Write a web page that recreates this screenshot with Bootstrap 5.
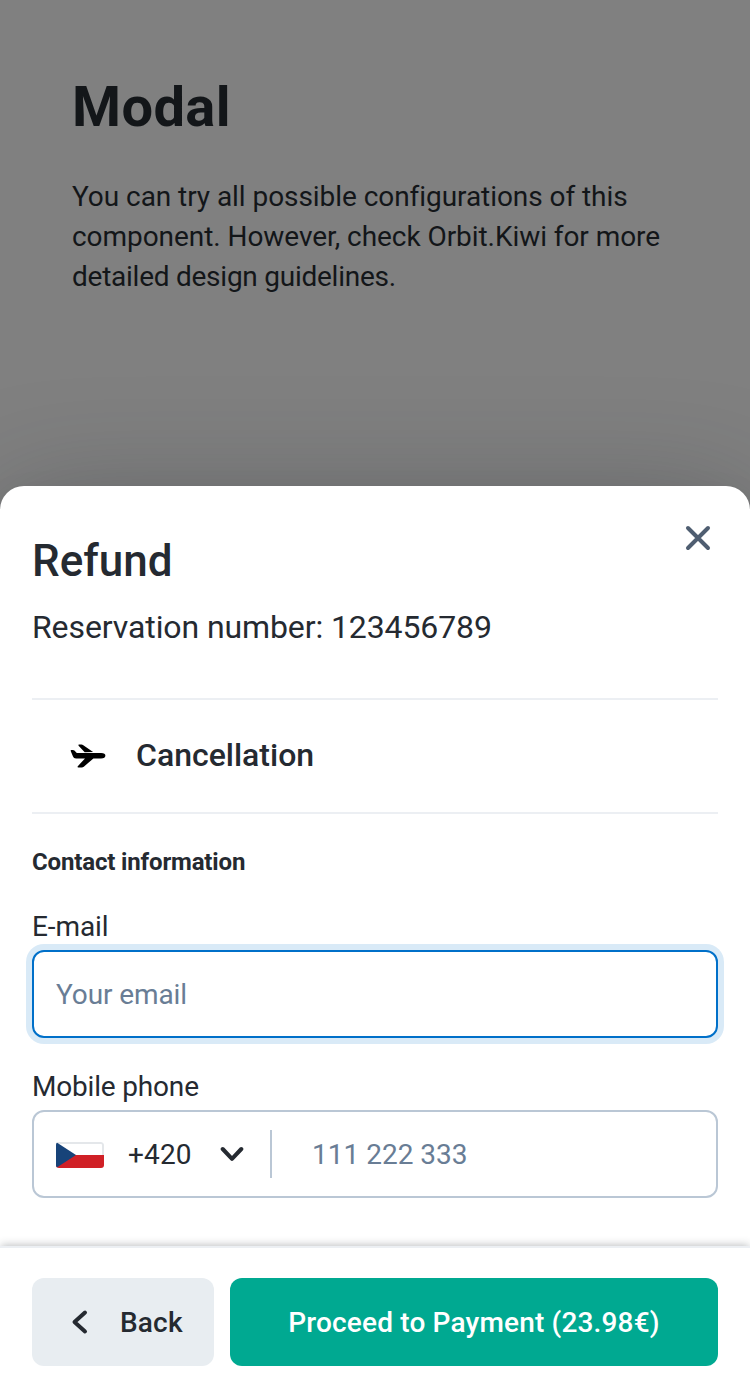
<!DOCTYPE html>
<html lang="en">
<head>
<meta charset="utf-8">
<meta name="viewport" content="width=device-width, initial-scale=1">
<title>Refund</title>
<link href="https://cdn.jsdelivr.net/npm/bootstrap@5.3.0/dist/css/bootstrap.min.css" rel="stylesheet">
<style>
  body { font-family: Roboto, "Liberation Sans", sans-serif; color: #252a31; background: #808080; font-size: 28px; line-height: 40px; }
  .page-intro { height: 486px; padding: 73px 72px 0; color: #131619; }
  .page-intro h1 { font-size: 56px; line-height: 68px; font-weight: 700; margin-bottom: 36px; letter-spacing: .4px; }
  .page-intro p { letter-spacing: -.06px; }
  .page-intro .tight { letter-spacing: -.25px; }
  .sheet { height: 912px; border-radius: 24px 24px 0 0; box-shadow: 0 24px 48px -8px rgba(37,42,49,.24), 0 16px 120px 0 rgba(37,42,49,.32); }
  .sheet-body { padding: 47px 32px 0; }
  .sheet-title { font-size: 44px; line-height: 56px; font-weight: 500; }
  .sheet-sub { font-size: 32px; line-height: 48px; margin: 14px 0 47px; letter-spacing: -.1px; }
  .close-btn { width: 40px; height: 40px; margin-top: -15px; }
  .section-row { height: 116px; border-top: 2px solid #eceff3; border-bottom: 2px solid #eceff3; padding-left: 32px; gap: 24px; font-size: 32px; font-weight: 500; }
  .section-row span { padding-bottom: 2px; }
  .section-title { font-size: 24px; line-height: 32px; font-weight: 700; margin: 32px 0 29px; letter-spacing: -.15px; }
  .field-label { display: block; line-height: 40px; margin-bottom: 3px; letter-spacing: -.1px; }
  .field-label.phone-label { margin-top: 29px; letter-spacing: -.18px; }
  .field-box { height: 88px; border: 2px solid #bac7d5; border-radius: 12px; padding: 0 22px; background: #fff; font-size: 28px; letter-spacing: -.1px; }
  .field-box.active, .field-box.active:focus { border-color: #0070c9; box-shadow: 0 0 0 6px #d9eaf7; }
  .field-box::placeholder, .phone-input::placeholder { color: #697d95; opacity: 1; }
  .phone-input { font-size: 28px; padding: 2px 0 0 40px; width: auto; min-width: 0; flex: 1; letter-spacing: 0; }
  .phone-input:focus { box-shadow: none; }
  .divider { width: 2px; height: 48px; background: #bac7d5; margin-left: 26px; }
  .flag { margin-top: 2px; }
  .prefix { width: 92px; padding-top: 2px; letter-spacing: .15px; }
  .sheet-footer { height: 152px; padding: 30px 32px 0; gap: 16px; border-top: 2px solid #eceff3; box-shadow: 0 -2px 8px -1px rgba(37,42,49,.3); }
  .action { height: 88px; border: 0; border-radius: 12px; font-size: 28px; font-weight: 500; padding: 2px 0 0; letter-spacing: .17px; }
  .action-back { width: 182px; background: #e8edf1; color: #252a31; }
  .action-back svg { margin-top: -2px; }
  .action-pay { background: #00a991; color: #fff; }
</style>
</head>
<body class="overflow-hidden">
<header class="page-intro">
  <h1>Modal</h1>
  <p class="m-0">You can try all possible configurations of this component. However, check Orbit.Kiwi for more <span class="tight">detailed design guidelines.</span></p>
</header>
<main class="sheet bg-white d-flex flex-column position-relative" role="dialog" aria-label="Refund">
  <div class="sheet-body flex-grow-1">
    <div class="d-flex justify-content-between">
      <h2 class="sheet-title m-0">Refund</h2>
      <button class="close-btn btn p-0 border-0 d-flex" aria-label="Close">
        <svg width="40" height="40" viewBox="0 0 40 40" fill="none" stroke="#4f5e71" stroke-width="4" stroke-linecap="round"><path d="M10 10 30 30M30 10 10 30"/></svg>
      </button>
    </div>
    <p class="sheet-sub">Reservation number: 123456789</p>
    <div class="section-row d-flex align-items-center">
      <svg width="48" height="48" viewBox="0 0 48 48" fill="#000"><path d="M7.3 18h1.6q.9 0 1.5.6l2.4 2.3H37.2q4.2.3 4.2 2.6 0 2.9-4.4 2.9h-7.6l-9.6 8.3q-.9.7-2 .7h-3.4q-1.5-.1-.6-1.2l7.2-7.8h-9q-2.4 0-3-2L6.7 19q-.2-.9.6-1Z"/><path d="M14.6 13.8q-.8-1.1.6-1.2h2.2q1.1 0 1.9.6l9.8 6.9-8.4.1Z"/></svg>
      <span>Cancellation</span>
    </div>
    <h3 class="section-title">Contact information</h3>
    <label class="field-label" for="email">E-mail</label>
    <input id="email" class="field-box active form-control" type="email" placeholder="Your email">
    <label class="field-label phone-label" for="phone">Mobile phone</label>
    <div class="field-box d-flex align-items-center">
      <svg class="flag flex-shrink-0" width="48" height="26" viewBox="0 0 48 26"><defs><clipPath id="flag"><rect width="48" height="26" rx="3"/></clipPath></defs><g clip-path="url(#flag)"><path fill="#fff" d="M0 0h48v26H0z"/><path d="M0 1h45q2 0 2 2v10" fill="none" stroke="#e4e7ea" stroke-width="2"/><path fill="#d02026" d="M0 13h48v13H0z"/><path fill="#174379" d="M0 0 20 13 0 26z"/></g></svg>
      <span class="prefix ms-4 flex-shrink-0">+420</span>
      <svg class="flex-shrink-0" width="24" height="24" viewBox="0 0 24 24" fill="none" stroke="#252a31" stroke-width="4" stroke-linecap="round" stroke-linejoin="round"><path d="m2.7 7 9.3 9.8L21.3 7"/></svg>
      <span class="divider flex-shrink-0"></span>
      <input id="phone" class="phone-input form-control border-0 bg-transparent" type="tel" placeholder="111 222 333">
    </div>
  </div>
  <footer class="sheet-footer d-flex bg-white">
    <button class="action action-back btn d-flex align-items-center">
      <svg class="flex-shrink-0" width="88" height="48" viewBox="0 0 88 48" fill="none" stroke="#252a31" stroke-width="4" stroke-linecap="round" stroke-linejoin="round"><path d="M53 14.5 42.5 24 53 33.5"/></svg>
      <span>Back</span>
    </button>
    <button class="action action-pay btn flex-grow-1">Proceed to Payment (23.98€)</button>
  </footer>
</main>
<script src="https://cdn.jsdelivr.net/npm/bootstrap@5.3.0/dist/js/bootstrap.bundle.min.js"></script>
</body>
</html>
